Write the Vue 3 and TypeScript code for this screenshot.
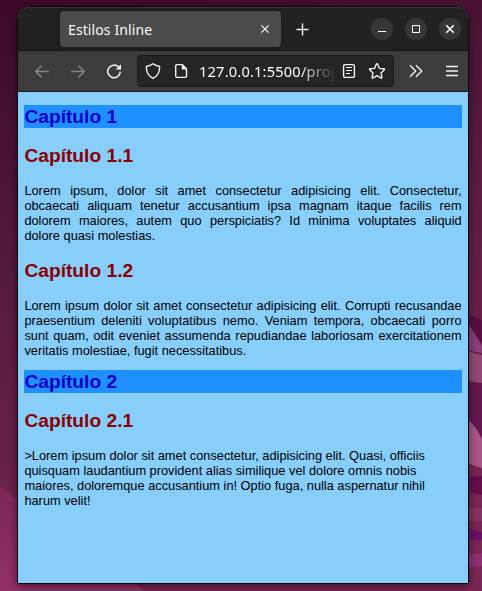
<script setup lang="ts">
interface Section {
  chapter?: string
  title: string
  text: string
  justified: boolean
}

const sections: Section[] = [
  {
    chapter: 'Capítulo 1',
    title: 'Capítulo 1.1',
    text: 'Lorem ipsum, dolor sit amet consectetur adipisicing elit. Consectetur, obcaecati aliquam tenetur accusantium ipsa magnam itaque facilis rem dolorem maiores, autem quo perspiciatis? Id minima voluptates aliquid dolore quasi molestias.',
    justified: true,
  },
  {
    title: 'Capítulo 1.2',
    text: 'Lorem ipsum dolor sit amet consectetur adipisicing elit. Corrupti recusandae praesentium deleniti voluptatibus nemo. Veniam tempora, obcaecati porro sunt quam, odit eveniet assumenda repudiandae laboriosam exercitationem veritatis molestiae, fugit necessitatibus.',
    justified: true,
  },
  {
    chapter: 'Capítulo 2',
    title: 'Capítulo 2.1',
    text: '>Lorem ipsum dolor sit amet consectetur, adipisicing elit. Quasi, officiis quisquam laudantium provident alias similique vel dolore omnis nobis maiores, doloremque accusantium in! Optio fuga, nulla aspernatur nihil harum velit!',
    justified: false,
  },
]
</script>

<template>
  <div class="desktop">
    <svg class="wallpaper" width="482" height="591" viewBox="0 0 482 591" aria-hidden="true">
      <defs>
        <linearGradient id="sky" x1="0" y1="0" x2="0.25" y2="1">
          <stop offset="0" stop-color="#3d0a29" />
          <stop offset="0.45" stop-color="#571a3e" />
          <stop offset="1" stop-color="#782654" />
        </linearGradient>
        <linearGradient id="hill" x1="0" y1="0" x2="0" y2="1">
          <stop offset="0" stop-color="#7c2857" />
          <stop offset="1" stop-color="#923068" />
        </linearGradient>
      </defs>
      <rect width="482" height="591" fill="url(#sky)" />
      <path d="M0 487L145 591H0z" fill="url(#hill)" />
      <path d="M460 310L482 320V352L466 342z" fill="#581044" />
      <path d="M466 320L482 345V353L466 350z" fill="#893e78" />
      <path d="M466 351L482 355V384L466 380z" fill="#914872" />
      <path d="M466 382L482 383V438L466 420z" fill="#64164f" />
      <path d="M466 418Q474 423 482 439V468L466 463z" fill="#a65687" />
      <path d="M466 477L482 476V495L466 492z" fill="#640f4b" />
      <path d="M466 508H482V521H466z" fill="#81345f" />
      <path d="M466 528L482 532V540L466 538z" fill="#651263" />
      <path d="M466 554L482 553V566L466 568z" fill="#8e3071" />
    </svg>

    <div class="window">
      <header class="titlebar">
        <div class="tab">
          <span class="tab-title">Estilos Inline</span>
          <svg width="10" height="10" viewBox="0 0 10 10"><path d="M1.4 1.4l7.2 7.2M8.6 1.4l-7.2 7.2" /></svg>
        </div>
        <svg class="new-tab" width="14" height="14" viewBox="0 0 14 14"><path d="M7.5 1.5v12M1.5 7.5h12" /></svg>
        <div class="controls">
          <span class="control"><svg width="22" height="22" viewBox="0 0 22 22"><path d="M7 13.5h8" /></svg></span>
          <span class="control"><svg width="22" height="22" viewBox="0 0 22 22"><path d="M7.5 7.5h7v7h-7z" /></svg></span>
          <span class="control"><svg width="22" height="22" viewBox="0 0 22 22"><path d="M7.3 7.3l7.4 7.4M14.7 7.3l-7.4 7.4" stroke-width="1.6" /></svg></span>
        </div>
      </header>

      <nav class="toolbar">
        <svg class="back dim" width="16" height="16" viewBox="0 0 16 16"><path d="M15 8.5H1.5M7.5 2.8L1.7 8.5l5.8 5.7" /></svg>
        <svg class="forward dim" width="16" height="16" viewBox="0 0 16 16"><path d="M1 8.5h13.5M8.5 2.8l5.8 5.7-5.8 5.7" /></svg>
        <svg class="reload" width="16" height="16" viewBox="0 0 16 16">
          <path d="M12.6 4.1A6.3 6.3 0 1 0 14.3 8.8" stroke-width="1.5" />
          <path class="solid" d="M15 1.2v5.3H9.7z" />
        </svg>
        <div class="urlbar">
          <svg class="shield" width="16" height="16" viewBox="0 0 16 16"><path d="M8 .8C9.6 2 11.8 3 13.9 3.3q.8.1.8 1C14.5 9.3 12.2 13.4 8 15.3 3.8 13.4 1.5 9.3 1.3 4.3q0-.9.8-1C4.2 3 6.4 2 8 .8z" stroke-linejoin="round" /></svg>
          <svg class="page-icon" width="14" height="16" viewBox="0 0 14 16">
            <path d="M3 1.6h5.3l4.2 4.2v7.3a1.3 1.3 0 0 1-1.3 1.3H3a1.3 1.3 0 0 1-1.3-1.3V2.9A1.3 1.3 0 0 1 3 1.6z" stroke-width="1.4" />
            <path class="solid" d="M7.8 1.2v5.2H13z" />
          </svg>
          <span class="url">127.0.0.1:5500/proj</span>
          <svg class="reader" width="14" height="16" viewBox="0 0 14 16">
            <rect x="1.6" y="1.6" width="10.8" height="12.8" rx="1.5" />
            <path d="M4 4.5h6M4 7.5h6M4 10.5h4" stroke-width="1.1" />
          </svg>
          <svg class="star" width="18" height="18" viewBox="0 0 18 18"><path d="M8.2 2.4q.8-1.3 1.6 0l1.7 4 4.2.4q1.4.3.4 1.3l-3.1 2.8.9 4.2q.1 1.4-1.1.8L9 13.7l-3.8 2.2q-1.2.6-1.1-.8l.9-4.2-3.1-2.8q-1-1 .4-1.3l4.2-.4z" stroke-linejoin="round" /></svg>
        </div>
        <svg class="more" width="14" height="14" viewBox="0 0 14 14"><path d="M1 1.2L6.7 7 1 12.8M7 1.2L12.7 7 7 12.8" /></svg>
        <svg class="menu" width="12" height="12" viewBox="0 0 12 12"><path d="M0 1.5h12M0 6h12M0 10.5h12" /></svg>
      </nav>

      <main class="page">
        <section v-for="s in sections" :key="s.title">
          <h1 v-if="s.chapter">{{ s.chapter }}</h1>
          <h2>{{ s.title }}</h2>
          <p :class="{ justified: s.justified }">{{ s.text }}</p>
        </section>
      </main>
    </div>
  </div>
</template>

<style>
body {
  margin: 0;
  overflow: hidden;
}
</style>

<style scoped>
.desktop {
  position: relative;
  box-sizing: border-box;
  width: 482px;
  height: 591px;
  padding: 6px 0 0 17px;
  overflow: hidden;
}
.wallpaper {
  position: absolute;
  inset: 0;
}
svg {
  display: block;
  flex: none;
  fill: none;
  stroke: #f4f4f4;
  stroke-width: 1.4;
}
.wallpaper {
  stroke: none;
}
.solid {
  fill: #f4f4f4;
  stroke: none;
}
.window {
  position: relative;
  box-sizing: border-box;
  width: 452px;
  height: 578px;
  display: flex;
  flex-direction: column;
  border: 1px solid #0b070a;
  border-radius: 13px 13px 0 0;
  overflow: hidden;
  box-shadow: 0 2px 9px rgba(0, 0, 0, 0.5);
  font-family: "Noto Sans", "Open Sans", sans-serif;
  background: #87cefa;
}
.titlebar {
  box-sizing: border-box;
  height: 44px;
  flex: none;
  display: flex;
  align-items: center;
  padding: 0 7px 0 42px;
  background: #222;
  border-top: 1px solid #373737;
  border-bottom: 1px solid #151515;
}
.tab {
  box-sizing: border-box;
  width: 221px;
  height: 36px;
  display: flex;
  align-items: center;
  justify-content: space-between;
  padding: 0 11px 0 8px;
  border-radius: 4px;
  background: #4b4b4b;
  box-shadow: 0 0 3px #111;
}
.tab svg {
  stroke-width: 1.2;
}
.tab-title {
  padding-top: 2px;
  font-size: 14px;
  line-height: 20px;
  letter-spacing: 0.1px;
  color: #fafafa;
}
.new-tab {
  margin-left: 14px;
}
.controls {
  display: flex;
  gap: 12px;
  margin-left: auto;
}
.control {
  width: 22px;
  height: 22px;
  border-radius: 50%;
  background: #373737;
}
.control svg {
  stroke-width: 1;
  stroke: #fff;
}
.toolbar {
  box-sizing: border-box;
  height: 41px;
  flex: none;
  display: flex;
  align-items: center;
  padding: 0 10px 0 16px;
  background: #3c3c3c;
  border-bottom: 1px solid #191919;
}
.dim {
  stroke: #858585;
}
.forward {
  margin-left: 20px;
}
.reload {
  margin-left: 20px;
}
.urlbar {
  box-sizing: border-box;
  width: 257px;
  height: 32px;
  display: flex;
  align-items: center;
  margin-left: 15px;
  padding: 0 6px 0 7px;
  border: 1px solid #191919;
  border-radius: 4px;
  background: #252525;
}
.page-icon {
  margin-left: 13px;
}
.url {
  width: 134px;
  margin-left: 11px;
  overflow: hidden;
  white-space: nowrap;
  font-size: 14.6px;
  line-height: 22px;
  letter-spacing: 0.2px;
  color: #fafafa;
  -webkit-mask-image: linear-gradient(to right, #000 100px, transparent 138px);
  mask-image: linear-gradient(to right, #000 100px, transparent 138px);
}
.reader {
  margin-left: 9px;
}
.star {
  margin-left: 12px;
}
.more {
  margin-left: 15px;
}
.menu {
  margin-left: auto;
}
.page {
  flex: 1;
  padding: 13px 6px 0;
  font-family: "Liberation Sans", Arial, sans-serif;
  color: #000;
}
h1,
h2 {
  margin: 0;
  padding-left: 0.4px;
  font-size: 19.2px;
  line-height: 23px;
  font-weight: bold;
}
h1 {
  margin-bottom: 16px;
  color: #0000cd;
  background: #1e90ff;
}
h2 {
  margin-bottom: 16px;
  color: #8b0000;
}
p {
  margin: 0;
  padding: 0 0.4px;
  font-size: 12.8px;
  line-height: 15px;
}
.justified {
  text-align: justify;
}
section:nth-child(2) {
  margin: 16px 0 12px;
}
</style>
